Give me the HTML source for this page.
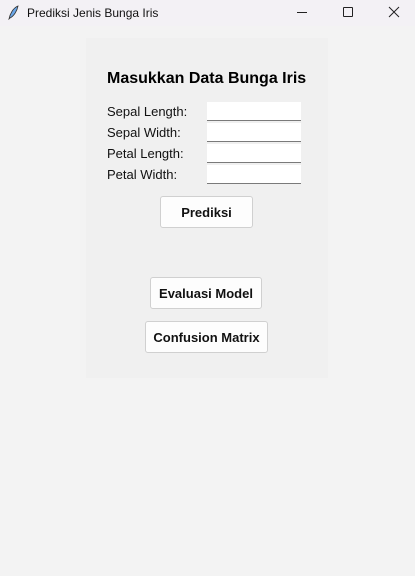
<!DOCTYPE html><html><head><style>
body{margin:0;width:415px;height:576px;background:#f3f3f3;font-family:"Liberation Sans",Arial,sans-serif;position:relative;overflow:hidden}
.tb{position:absolute;left:0;top:0;width:415px;height:26px;background:#f3f1f5;font-size:12px;color:#111}
.p{position:absolute;left:86px;top:38px;width:242px;height:340px;background:#f0f0f0}
.a{position:absolute}
.l{font-size:13px;color:#111;left:107px}
.e{left:207px;width:94px;height:18px;background:#fff;border-bottom:1px solid #7a7a7a}
.b{background:#fdfdfd;border:1px solid #d0d0d0;border-radius:3px;font-weight:bold;font-size:13px;text-align:center;box-sizing:border-box;color:#111}
</style></head><body>
<div class="tb">
<svg class="a" style="left:7px;top:5px" width="12" height="15" viewBox="0 0 12 15"><path d="M2 14 C3 9 6 3 11 1 C10 6 7 11 3 13 Z" fill="#6aa6e8" stroke="#333" stroke-width="0.8"/></svg>
<span class="a" style="left:27px;top:6px">Prediksi Jenis Bunga Iris</span>
<div class="a" style="left:297px;top:12px;width:10px;height:1px;background:#222"></div>
<div class="a" style="left:343px;top:7px;width:8px;height:8px;border:1px solid #222;border-radius:1px"></div>
<svg class="a" style="left:388px;top:6px" width="12" height="12"><path d="M1 1L11 11M11 1L1 11" stroke="#222" stroke-width="1"/></svg>
</div>
<div class="p"></div>
<div class="a" style="left:107px;top:70px;font-weight:bold;font-size:16px;color:#000">Masukkan Data Bunga Iris</div>
<div class="a l" style="top:104px">Sepal Length:</div>
<div class="a l" style="top:125px">Sepal Width:</div>
<div class="a l" style="top:146px">Petal Length:</div>
<div class="a l" style="top:167px">Petal Width:</div>
<div class="a e" style="top:102px"></div>
<div class="a e" style="top:123px"></div>
<div class="a e" style="top:144px"></div>
<div class="a e" style="top:165px"></div>
<div class="a b" style="left:160px;top:196px;width:93px;height:32px;line-height:32px">Prediksi</div>
<div class="a b" style="left:150px;top:277px;width:112px;height:32px;line-height:32px">Evaluasi Model</div>
<div class="a b" style="left:145px;top:321px;width:123px;height:32px;line-height:32px">Confusion Matrix</div>
</body></html>
